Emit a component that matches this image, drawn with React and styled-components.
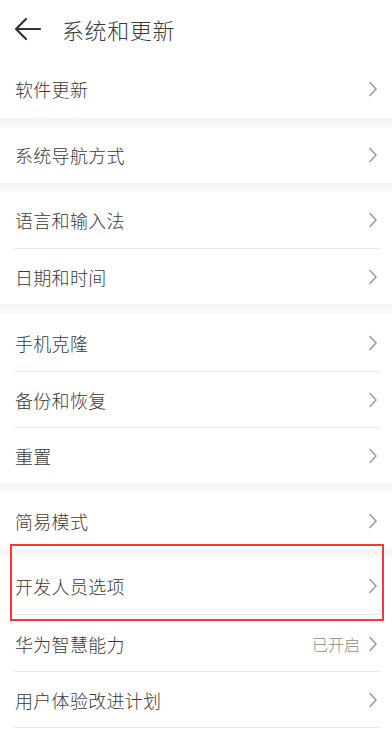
import React from 'react';
import styled, { createGlobalStyle } from 'styled-components';

const GlobalStyle = createGlobalStyle`
    html, body {
        margin: 0;
        padding: 0;
        background: #fff;
    }
    body {
        font-family: "Noto Sans CJK SC", "Noto Sans", sans-serif;
        color: #333;
    }
`;

const Page = styled.div`
    width: 392px;
    height: 735px;
    overflow: hidden;
    background: #fff;
`;

const Header = styled.div`
    height: 60px;
    box-sizing: border-box;
    display: flex;
    align-items: center;
    padding: 0 0 3px 14px;
    gap: 20px;
`;

const Title = styled.h1`
    margin: 0;
    font-size: 22px;
    font-weight: 300;
    color: #3a3a3a;
    letter-spacing: 0.6px;
`;

const Band = styled.div`
    height: ${props => props.h}px;
    background: linear-gradient(#f4f4f4, #f9f9f9);
`;

const Row = styled.div`
    height: ${props => props.h}px;
    display: flex;
    align-items: center;
    padding: 0 14px 0 15px;
    position: relative;
    ${props => props.divider && `
        &::after {
            content: '';
            position: absolute;
            left: 14px;
            right: 12px;
            bottom: 0;
            height: 1px;
            background: #e8e8e8;
        }
    `}
`;

const Label = styled.span`
    flex: 1;
    font-size: 18px;
    font-weight: 300;
    letter-spacing: 0.3px;
    color: #3a3a3a;
`;

const Status = styled.span`
    font-size: 16px;
    font-weight: 300;
    color: #8a8a8a;
    margin-right: 8px;
`;

const Highlight = styled.div`
    position: relative;

    &::before {
        content: '';
        position: absolute;
        top: -5px;
        left: 10px;
        right: 8px;
        bottom: -6px;
        border: 2.5px solid #ff3535;
        pointer-events: none;
        z-index: 2;
    }
`;

const BackArrow = () => (
    <svg width="28" height="24" viewBox="0 0 28 24">
        <path d="M2 12 H26 M12 2 L2 12 L12 22" fill="none" stroke="#333" strokeWidth="2.2" strokeLinecap="round" strokeLinejoin="round" />
    </svg>
);

const Chevron = () => (
    <svg width="10" height="16" viewBox="0 0 10 16">
        <path d="M2 1.5 L8 8 L2 14.5" fill="none" stroke="#9c9c9c" strokeWidth="1.6" strokeLinecap="round" strokeLinejoin="round" />
    </svg>
);

const Item = ({ label, status, h = 56, divider }) => (
    <Row h={h} divider={divider}>
        <Label>{label}</Label>
        {status && <Status>{status}</Status>}
        <Chevron />
    </Row>
);

export default function App() {
    return (
        <Page>
            <GlobalStyle />
            <Header>
                <BackArrow />
                <Title>系统和更新</Title>
            </Header>
            <Item label="软件更新" h={58} />
            <Band h={9} />
            <Item label="系统导航方式" h={56} />
            <Band h={8} />
            <Item label="语言和输入法" h={58} divider />
            <Item label="日期和时间" h={55} />
            <Band h={10} />
            <Item label="手机克隆" h={58} divider />
            <Item label="备份和恢复" h={56} divider />
            <Item label="重置" h={55} />
            <Band h={9} />
            <Item label="简易模式" h={57} />
            <Highlight>
                <Band h={8} />
                <Item label="开发人员选项" h={58} divider />
            </Highlight>
            <Item label="华为智慧能力" status="已开启" h={57} divider />
            <Item label="用户体验改进计划" h={56} divider />
        </Page>
    );
}
